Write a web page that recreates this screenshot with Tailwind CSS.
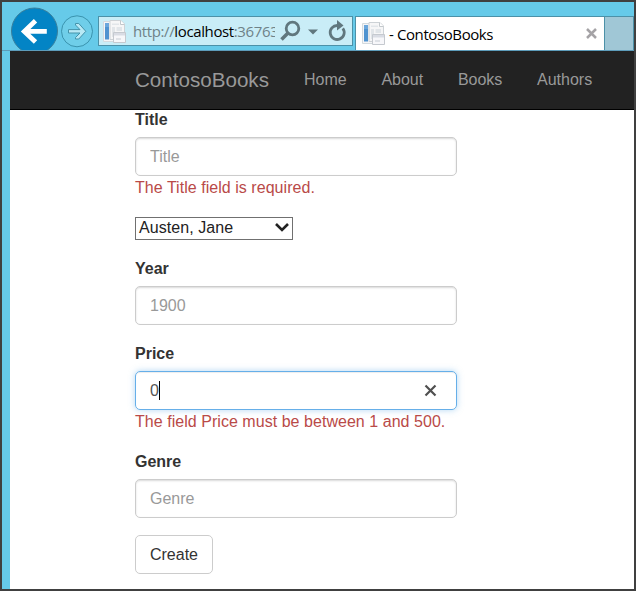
<!DOCTYPE html>
<html lang="en">
<head>
<meta charset="utf-8">
<title>- ContosoBooks</title>
<script src="https://cdn.jsdelivr.net/npm/@tailwindcss/browser@4"></script>
</head>
<body class="h-[591px] w-[636px] overflow-hidden bg-white">
<svg class="hidden">
  <defs>
    <symbol id="page" viewBox="0 0 25 25">
      <path d="M1.500 2.500H12V22.500H1.500Z" fill="#f5f5f7" stroke="#d3dade"/>
      <path d="M3 4H7V20.500H3Z" fill="#4f93d0"/>
      <path d="M3 4H7V8H3Z" fill="#6ba7dc"/>
      <path d="M8 1.500H19L22.500 5V20.500H8Z" fill="#f6f6f7" stroke="#cdd2d6"/>
      <path d="M18.500 1.500V5.500H22.500" fill="#fff" stroke="#c3c8cc"/>
      <path d="M10 4.500H17V6H10ZM10 8H13V18H10ZM14.500 8H20V12H14.500Z" fill="#e1e5e9"/>
      <path d="M11.500 13.500H23.500V23.500H11.500Z" fill="#f7f7fa" stroke="#c5c9cf"/>
      <path d="M12 14H23V16.500H12Z" fill="#d9dce4"/>
      <path d="M14 19H19V21H14Z" fill="#dfe2e7"/>
    </symbol>
  </defs>
</svg>
<div class="flex h-full w-full flex-col border-2 border-[#404040] bg-[#66cae9] font-['Liberation_Sans',Arial,sans-serif] text-base leading-[23px] text-[#333]">
  <header class="flex h-[49px] shrink-0 items-start border-b border-[#5d9cba] pt-[5px] pl-2">
    <svg class="h-[43px] w-12 shrink-0" viewBox="0 0 48 43">
      <circle cx="24.500" cy="24" r="23" fill="#0384c5" stroke="#397f9c"/>
      <path d="M36.800 24.400H14M25.500 13.700L14.300 24.400L25.500 35.100" fill="none" stroke="#fff" stroke-width="4.800"/>
    </svg>
    <svg class="ml-[2px] h-[43px] w-[34px] shrink-0" viewBox="0 0 34 43">
      <circle cx="17" cy="24.300" r="15.500" fill="#6fcee9" stroke="#3a93ae"/>
      <path d="M8.500 22.600H20L15.500 18V16.500H18.800L25.800 24.300L18.800 32H15.500V30.500L20 26H8.500Z" fill="#b8e9f5" stroke="#4493aa" stroke-width="1"/>
    </svg>
    <div class="mt-[9px] ml-1 flex h-[30px] w-[255px] shrink-0 items-center border border-[#4c91a8] bg-[#c9edf7]">
      <svg class="ml-[3px] h-[25px] w-[25px] shrink-0"><use href="#page"/></svg>
      <div class="ml-[6px] w-[142px] overflow-hidden font-['Open_Sans','Noto_Sans',sans-serif] text-[15px] leading-[26px] tracking-[-0.38px] whitespace-nowrap text-[#6f8288]">http://<span class="text-black">localhost</span>:36763</div>
      <svg class="ml-[5px] h-[22px] w-[22px]" viewBox="0 0 22 22" fill="none" stroke="#60777e">
        <circle cx="12.500" cy="8.500" r="6.300" stroke-width="2.800"/><path d="M8 13L1.500 19.500" stroke-width="3.500"/>
      </svg>
      <svg class="mt-[2px] ml-[6px] h-[6px] w-[10px]" viewBox="0 0 10 6"><path d="M0 .5H10L5 5.500Z" fill="#60777e"/></svg>
      <svg class="ml-[10px] h-[22px] w-[19px]" viewBox="0 0 19 22">
        <path d="M14.800 8.300A7 7 0 1 1 9.500 5.500" fill="none" stroke="#60777e" stroke-width="2.800"/>
        <path d="M9 0L15.500 5.500L9 10.500Z" fill="#60777e"/>
      </svg>
    </div>
    <div class="mt-[9px] ml-[2px] flex h-[34px] w-[249px] shrink-0 items-center border-t border-l border-[#4c91a8] bg-white">
      <svg class="ml-[5px] h-[25px] w-[25px] shrink-0"><use href="#page"/></svg>
      <span class="mt-px ml-[3px] font-['Open_Sans','Noto_Sans',sans-serif] text-[15px] tracking-[-0.4px] whitespace-nowrap text-black">- ContosoBooks</span>
      <svg class="mr-[7px] ml-auto h-[11px] w-[11px]" viewBox="0 0 11 11"><path d="M1 1L10 10M10 1L1 10" stroke="#a5a3a6" stroke-width="2.500"/></svg>
    </div>
    <div class="mt-[9px] h-[34px] w-[30px] shrink-0 border border-b-0 border-[#4c91a8] bg-[#a0c7d6]"></div>
  </header>
  <div class="ml-2 min-h-0 flex-1 bg-white">
    <nav class="flex h-[59px] items-center border-b border-black bg-[#222] pb-[2px] pl-[125px] text-[#999]">
      <a class="w-[169px] text-[20.6px]">ContosoBooks</a>
      <div class="flex gap-[34.7px]"><a>Home</a><a>About</a><a>Books</a><a>Authors</a></div>
    </nav>
    <form class="ml-[125px] flex w-[322px] flex-col items-start">
      <label class="-mt-[2px] mb-[6px] font-bold">Title</label>
      <input class="h-[39px] w-full rounded-[5px] border border-[#ccc] px-[14px] shadow-[inset_0_1px_2px_rgba(0,0,0,0.15)] placeholder:text-[#999]" placeholder="Title">
      <p class="tracking-[0.04px] text-[#b94a48]">The Title field is required.</p>
      <div class="my-[18px] flex h-[23px] w-[158px] items-center justify-between border border-[#707070] pr-[3px] pb-[2px] pl-[3px] leading-[19px] text-[#222]">
        <span class="tracking-[0.06px]">Austen, Jane</span>
        <svg class="h-[9px] w-[14px]" viewBox="0 0 14 9"><path d="M1 1L7 7L13 1" fill="none" stroke="#222" stroke-width="2.600"/></svg>
      </div>
      <label class="-mt-px mb-[6px] font-bold">Year</label>
      <input class="h-[39px] w-full rounded-[5px] border border-[#ccc] px-[14px] shadow-[inset_0_1px_2px_rgba(0,0,0,0.15)] placeholder:text-[#999]" placeholder="1900">
      <label class="mt-[17px] mb-[6px] font-bold">Price</label>
      <div class="flex h-[39px] w-full items-center rounded-[5px] border border-[#66afe9] px-[14px] text-[#555] shadow-[inset_0_1px_1px_rgba(0,0,0,0.075),0_0_6px_rgba(102,175,233,0.5)]">
        <span>0</span><span class="h-[19px] w-px bg-black"></span>
        <svg class="mr-[5px] ml-auto h-[13px] w-[13px]" viewBox="0 0 13 13"><path d="M1.500 1.500L11.500 11.500M11.500 1.500L1.500 11.500" stroke="#505050" stroke-width="2.200"/></svg>
      </div>
      <p class="tracking-[0.04px] whitespace-nowrap text-[#b94a48]">The field Price must be between 1 and 500.</p>
      <label class="mt-[17px] mb-[6px] font-bold">Genre</label>
      <input class="h-[39px] w-full rounded-[5px] border border-[#ccc] px-[14px] shadow-[inset_0_1px_2px_rgba(0,0,0,0.15)] placeholder:text-[#999]" placeholder="Genre">
      <button type="button" class="mt-[17px] h-[39px] w-[78px] rounded-[5px] border border-[#ccc] bg-white">Create</button>
    </form>
  </div>
</div>
</body>
</html>
